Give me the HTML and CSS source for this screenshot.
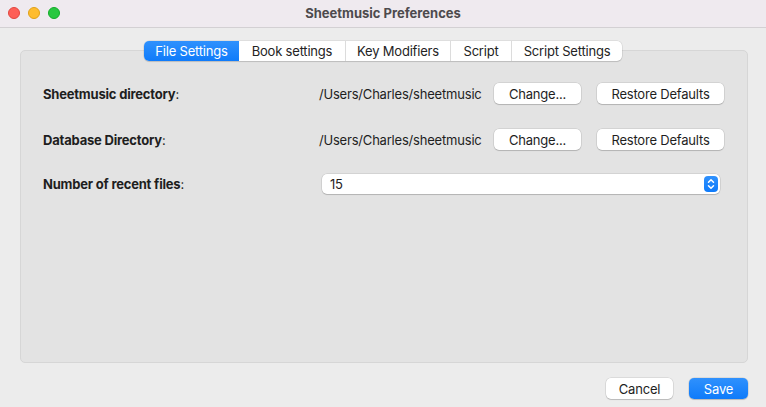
FILE: index.html
```html
<!DOCTYPE html>
<html>
<head>
<meta charset="utf-8">
<link rel="stylesheet" href="styles.css">
</head>
<body>
<div class="window">
  <header class="titlebar">
    <div class="lights">
      <span class="light red"></span>
      <span class="light yellow"></span>
      <span class="light green"></span>
    </div>
    <div class="title">Sheetmusic Preferences</div>
  </header>
  <main class="content">
    <nav class="tabs">
      <span class="tab active">File Settings</span>
      <span class="tab">Book settings</span>
      <span class="tab">Key Modifiers</span>
      <span class="tab">Script</span>
      <span class="tab">Script Settings</span>
    </nav>
    <section class="panel">
      <div class="grid">
        <div class="label"><b>Sheetmusic directory</b>:</div>
        <div class="path">/Users/Charles/sheetmusic</div>
        <button class="btn change">Change...</button>
        <button class="btn restore">Restore Defaults</button>

        <div class="label"><b>Database Directory</b>:</div>
        <div class="path">/Users/Charles/sheetmusic</div>
        <button class="btn change">Change...</button>
        <button class="btn restore">Restore Defaults</button>

        <div class="label"><b>Number of recent files</b>:</div>
        <div class="select">
          <span class="value">15</span>
          <span class="stepper">
            <svg width="14" height="16" viewBox="0 0 14 16">
              <path d="M4.5 6.3 L7 3.8 L9.5 6.3" fill="none" stroke="#fff" stroke-width="1.5" stroke-linecap="round" stroke-linejoin="round"/>
              <path d="M4.5 9.7 L7 12.2 L9.5 9.7" fill="none" stroke="#fff" stroke-width="1.5" stroke-linecap="round" stroke-linejoin="round"/>
            </svg>
          </span>
        </div>
      </div>
    </section>
    <footer class="actions">
      <button class="btn cancel">Cancel</button>
      <button class="btn primary">Save</button>
    </footer>
  </main>
</div>
</body>
</html>
```
FILE: styles.css
```css
* { box-sizing: border-box; }
html, body {
  margin: 0;
  padding: 0;
  width: 766px;
  height: 407px;
  overflow: hidden;
  background: #ececec;
  font-family: Inter, "Liberation Sans", Arial, sans-serif;
  font-size: 13px;
  letter-spacing: -0.2px;
  color: #1e1e1e;
}
.window {
  display: flex;
  flex-direction: column;
  height: 407px;
}
.titlebar {
  height: 28px;
  background: #efeaef;
  border-bottom: 1px solid #d3d0d3;
  display: flex;
  align-items: center;
  position: relative;
  justify-content: center;
}
.lights {
  position: absolute;
  left: 8px;
  top: 7px;
  display: flex;
  gap: 8px;
}
.light {
  width: 12px;
  height: 12px;
  border-radius: 50%;
  display: block;
}
.red { background: #fe5f57; border: 0.5px solid #e2463f; }
.yellow { background: #febc2e; border: 0.5px solid #e1a116; }
.green { background: #28c840; border: 0.5px solid #12ac28; }
.title {
  font-weight: 700;
  font-size: 13px;
  letter-spacing: 0;
  color: #4d4a4d;
  margin-top: -1px;
}
.content {
  flex: 1;
  display: flex;
  flex-direction: column;
  padding: 13px 18px 0 20px;
}
.tabs {
  align-self: flex-start;
  margin-left: 124px;
  display: flex;
  height: 20px;
  background: #fff;
  border-radius: 5px;
  box-shadow: 0 0 0 0.5px rgba(0,0,0,0.12), 0 1px 1px rgba(0,0,0,0.12);
  position: relative;
  z-index: 1;
}
.tab {
  display: flex;
  align-items: center;
  justify-content: center;
  height: 20px;
  color: #232323;
  border-left: 1px solid #dcdcdc;
}
.tab:first-child { border-left: none; }
.tab:nth-child(1) { width: 95px; }
.tab:nth-child(2) { width: 106px; }
.tab:nth-child(3) { width: 105px; }
.tab:nth-child(4) { width: 61px; }
.tab:nth-child(5) { width: 111px; }
.tab.active {
  background: linear-gradient(#2f91fd, #0f7bfa);
  color: #fff;
  border-radius: 5px 0 0 5px;
}
.tab.active + .tab { border-left: none; }
.panel {
  margin-top: -11px;
  height: 313px;
  background: #e3e3e3;
  border: 1px solid #d6d6d6;
  border-radius: 5px;
  padding: 32px 0 0 22px;
}
.grid {
  display: grid;
  grid-template-columns: 276px 175px 103px 127px;
  grid-template-rows: 21px 21px 20px;
  row-gap: 25px;
  align-items: center;
}
.grid > :nth-child(9) { margin-top: -2px; }
.label b { font-weight: 700; }
.label { color: #1e1e1e; }
.path { color: #1e1e1e; }
.btn {
  font-family: inherit;
  font-size: 13px;
  letter-spacing: -0.2px;
  height: 21px;
  border: none;
  border-radius: 5px;
  background: #fff;
  color: #1e1e1e;
  box-shadow: 0 0 0 0.5px rgba(0,0,0,0.14), 0 1px 1px rgba(0,0,0,0.15);
  padding: 0;
  display: flex;
  align-items: center;
  justify-content: center;
}
.change { width: 87px; }
.restore { width: 127px; }
.select {
  grid-column: 2 / 5;
  margin-left: 3px;
  width: 398px;
  height: 20px;
  margin-top: -2px;
  background: #fff;
  border-radius: 5px;
  box-shadow: 0 0 0 0.5px rgba(0,0,0,0.14), 0 1px 1px rgba(0,0,0,0.15);
  display: flex;
  align-items: center;
  justify-content: space-between;
  padding: 0 2px 0 8px;
}
.stepper {
  width: 14px;
  height: 16px;
  background: linear-gradient(#2f91fd, #0f7bfa);
  border-radius: 4px;
  display: flex;
}
.actions {
  display: flex;
  justify-content: flex-end;
  gap: 16px;
  margin-top: 15px;
}
.cancel { width: 67px; }
.primary {
  width: 59px;
  background: linear-gradient(#2f91fd, #0f7bfa);
  color: #fff;
}
```
